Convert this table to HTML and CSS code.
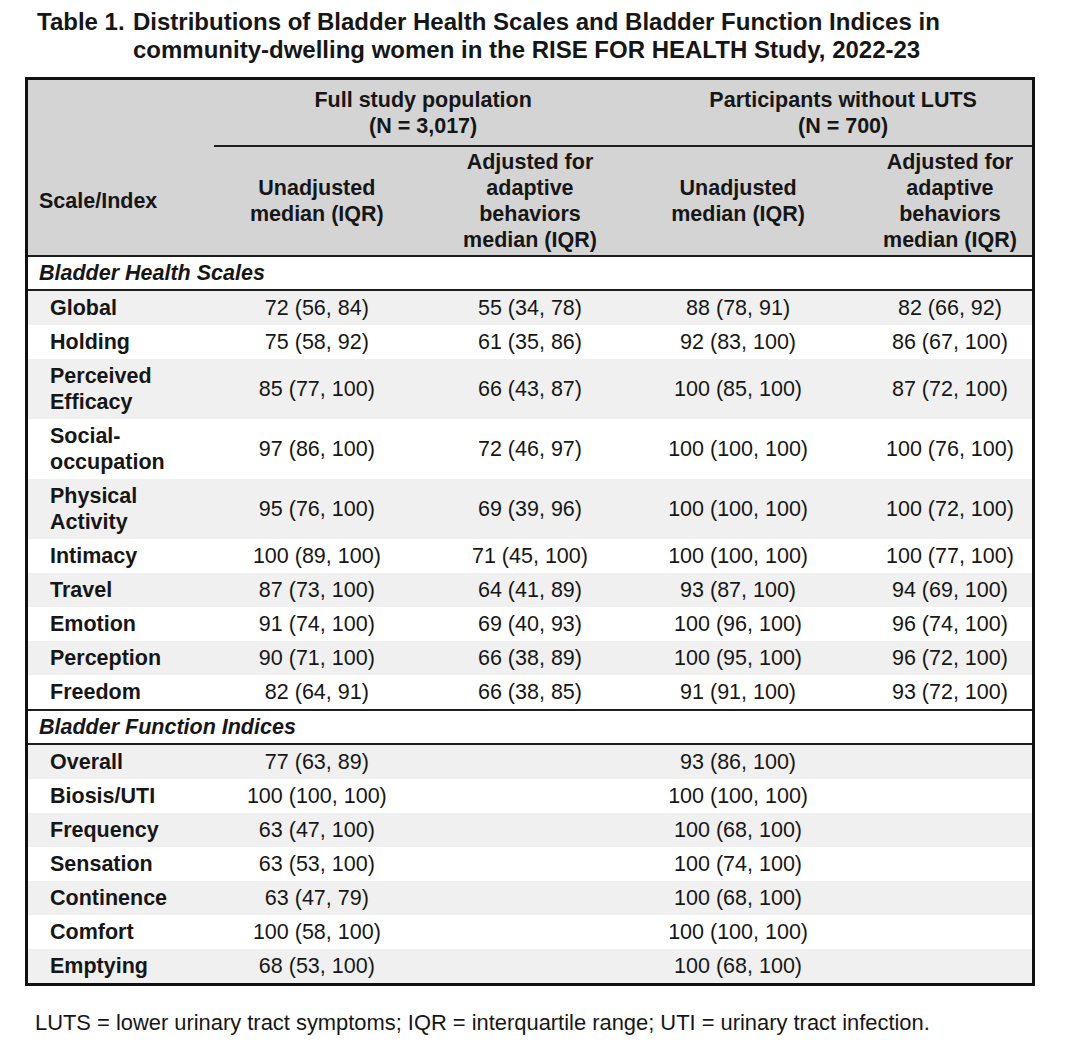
FILE: index.html
```html
<!DOCTYPE html>
<html lang="en">
<head>
<meta charset="utf-8">
<title>Table 1</title>
<link rel="stylesheet" href="styles.css">
</head>
<body>
<div class="page">
  <h1 class="title"><span class="label">Table 1.</span><span class="title-text">Distributions of Bladder Health Scales and Bladder Function Indices in community-dwelling women in the RISE FOR HEALTH Study, 2022-23</span></h1>
  <table class="data">
    <colgroup>
      <col class="c0"><col class="c1"><col class="c2"><col class="c3"><col class="c4">
    </colgroup>
    <thead>
      <tr class="grp">
        <th></th>
        <th colspan="2" class="g1">Full study population<br>(N = 3,017)</th>
        <th colspan="2" class="g2">Participants without LUTS<br>(N = 700)</th>
      </tr>
      <tr class="sub">
        <th class="name">Scale/Index</th>
        <th>Unadjusted<br>median (IQR)</th>
        <th>Adjusted for<br>adaptive<br>behaviors<br>median (IQR)</th>
        <th>Unadjusted<br>median (IQR)</th>
        <th class="last">Adjusted for<br>adaptive<br>behaviors<br>median (IQR)</th>
      </tr>
    </thead>
    <tbody class="scales">
      <tr class="section"><td colspan="5">Bladder Health Scales</td></tr>
      <tr class="odd"><td class="name">Global</td><td>72 (56, 84)</td><td>55 (34, 78)</td><td>88 (78, 91)</td><td class="last">82 (66, 92)</td></tr>
      <tr><td class="name">Holding</td><td>75 (58, 92)</td><td>61 (35, 86)</td><td>92 (83, 100)</td><td class="last">86 (67, 100)</td></tr>
      <tr class="odd"><td class="name">Perceived Efficacy</td><td>85 (77, 100)</td><td>66 (43, 87)</td><td>100 (85, 100)</td><td class="last">87 (72, 100)</td></tr>
      <tr><td class="name">Social-occupation</td><td>97 (86, 100)</td><td>72 (46, 97)</td><td>100 (100, 100)</td><td class="last">100 (76, 100)</td></tr>
      <tr class="odd"><td class="name">Physical Activity</td><td>95 (76, 100)</td><td>69 (39, 96)</td><td>100 (100, 100)</td><td class="last">100 (72, 100)</td></tr>
      <tr><td class="name">Intimacy</td><td>100 (89, 100)</td><td>71 (45, 100)</td><td>100 (100, 100)</td><td class="last">100 (77, 100)</td></tr>
      <tr class="odd"><td class="name">Travel</td><td>87 (73, 100)</td><td>64 (41, 89)</td><td>93 (87, 100)</td><td class="last">94 (69, 100)</td></tr>
      <tr><td class="name">Emotion</td><td>91 (74, 100)</td><td>69 (40, 93)</td><td>100 (96, 100)</td><td class="last">96 (74, 100)</td></tr>
      <tr class="odd"><td class="name">Perception</td><td>90 (71, 100)</td><td>66 (38, 89)</td><td>100 (95, 100)</td><td class="last">96 (72, 100)</td></tr>
      <tr><td class="name">Freedom</td><td>82 (64, 91)</td><td>66 (38, 85)</td><td>91 (91, 100)</td><td class="last">93 (72, 100)</td></tr>
    </tbody>
    <tbody class="indices">
      <tr class="section"><td colspan="5">Bladder Function Indices</td></tr>
      <tr class="odd"><td class="name">Overall</td><td>77 (63, 89)</td><td></td><td>93 (86, 100)</td><td class="last"></td></tr>
      <tr><td class="name">Biosis/UTI</td><td>100 (100, 100)</td><td></td><td>100 (100, 100)</td><td class="last"></td></tr>
      <tr class="odd"><td class="name">Frequency</td><td>63 (47, 100)</td><td></td><td>100 (68, 100)</td><td class="last"></td></tr>
      <tr><td class="name">Sensation</td><td>63 (53, 100)</td><td></td><td>100 (74, 100)</td><td class="last"></td></tr>
      <tr class="odd"><td class="name">Continence</td><td>63 (47, 79)</td><td></td><td>100 (68, 100)</td><td class="last"></td></tr>
      <tr><td class="name">Comfort</td><td>100 (58, 100)</td><td></td><td>100 (100, 100)</td><td class="last"></td></tr>
      <tr class="odd"><td class="name">Emptying</td><td>68 (53, 100)</td><td></td><td>100 (68, 100)</td><td class="last"></td></tr>
    </tbody>
  </table>
  <p class="note">LUTS = lower urinary tract symptoms; IQR = interquartile range; UTI = urinary tract infection.</p>
</div>
</body>
</html>
```
FILE: styles.css
```css
html, body {
  margin: 0;
  padding: 0;
  background: #ffffff;
}

body {
  font-family: "Liberation Sans", Arial, sans-serif;
  color: #161616;
}

.page {
  width: 1080px;
  height: 1056px;
  box-sizing: border-box;
  padding-top: 8px;
}

.title {
  display: flex;
  margin: 0 0 0 37px;
  font-size: 24px;
  font-weight: bold;
  line-height: 28px;
  width: 940px;
}

.title .label {
  flex: none;
  width: 96px;
}

.title .title-text {
  flex: none;
  width: 820px;
}

.data {
  margin: 13px 0 0 25px;
  width: 1010px;
  border-collapse: collapse;
  table-layout: fixed;
  border: 3px solid #111111;
  font-size: 21.5px;
  line-height: 26px;
}

.c0 { width: 187px; }
.c1 { width: 205px; }
.c2 { width: 220px; }
.c3 { width: 195px; }
.c4 { width: 197px; }

.data th,
.data td {
  padding: 4px 0;
  text-align: center;
  vertical-align: middle;
}

.data thead th {
  background: #d4d4d4;
  font-weight: bold;
}

.grp th {
  padding: 7px 0 6px;
}

.grp .g1,
.grp .g2 {
  border-bottom: 2px solid #1e1e1e;
}

.grp .g1 {
  padding-right: 8px;
}

.grp .g2 {
  padding-left: 14px;
}

.sub th {
  padding: 2px 0 2px;
  border-bottom: 2px solid #1e1e1e;
}

.data .name {
  text-align: left;
  font-weight: bold;
  padding-left: 22px;
  padding-right: 10px;
}

.sub .name {
  padding-left: 11px;
}

.data .last {
  padding-left: 32px;
}

.section td {
  text-align: left;
  font-weight: bold;
  font-style: italic;
  padding: 3px 0 3px 11px;
  border-bottom: 2px solid #1e1e1e;
  background: #ffffff;
}

.indices .section td {
  border-top: 2px solid #1e1e1e;
}

.data tbody tr.odd td {
  background: #f0f0f0;
}

.note {
  margin: 24px 0 0 35px;
  font-size: 21.9px;
  line-height: 26px;
}
```
